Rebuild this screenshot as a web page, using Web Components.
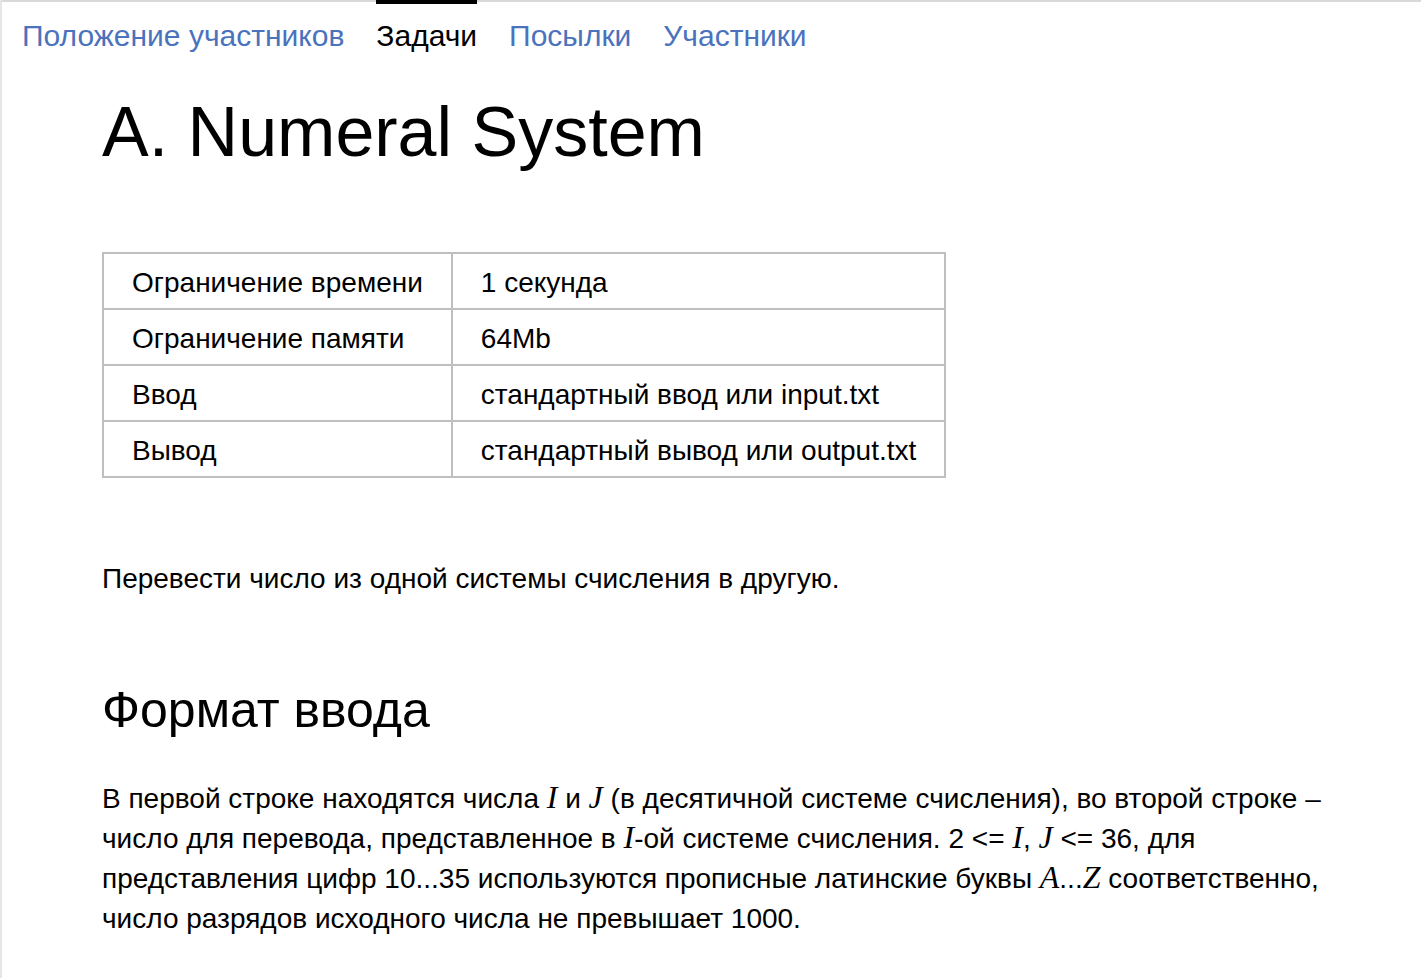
<!DOCTYPE html>
<html lang="ru">
<head>
<meta charset="utf-8">
<meta name="viewport" content="width=device-width, initial-scale=1">
<title>A. Numeral System</title>
<style>
  body { margin: 0; background: #fff; color: #000; font: 28px/40px "Liberation Sans", Arial, sans-serif; }
</style>
</head>
<body>
<contest-page>
  <contest-tabs slot="tabs">
    <contest-tab href="#standings">Положение участников</contest-tab>
    <contest-tab href="#problems" current>Задачи</contest-tab>
    <contest-tab href="#submissions">Посылки</contest-tab>
    <contest-tab href="#participants">Участники</contest-tab>
  </contest-tabs>
  <problem-statement></problem-statement>
</contest-page>

<template id="page-template">
  <style>
    :host { display: block; box-sizing: border-box; min-height: 100vh; border-left: 2px solid #e5e5e5; }
    main { display: block; padding: 33px 80px 40px 100px; }
  </style>
  <slot name="tabs"></slot>
  <main><slot></slot></main>
</template>

<template id="tabs-template">
  <style>
    :host { display: block; border-top: 2px solid #d9d9d9; }
    nav { display: flex; flex-wrap: wrap; gap: 0 32px; margin-top: -2px; padding: 0 20px; }
  </style>
  <nav><slot></slot></nav>
</template>

<template id="tab-template">
  <style>
    :host { display: block; }
    a { display: block; border-top: 4px solid transparent; padding: 12px 0 3px; font-size: 30px; line-height: 40px; color: #4a72bd; text-decoration: none; }
    a[aria-current] { border-top-color: #000; color: #000; }
  </style>
  <a><slot></slot></a>
</template>

<template id="limits-template">
  <style>
    :host { display: block; }
    table { border-collapse: collapse; }
    th, td { border: 2px solid #bfbfbf; padding: 9px 28px 5px; font-weight: 400; text-align: left; white-space: nowrap; }
  </style>
  <table>
    <tbody>
      <tr><th scope="row">Ограничение времени</th><td>1 секунда</td></tr>
      <tr><th scope="row">Ограничение памяти</th><td>64Mb</td></tr>
      <tr><th scope="row">Ввод</th><td>стандартный ввод или input.txt</td></tr>
      <tr><th scope="row">Вывод</th><td>стандартный вывод или output.txt</td></tr>
    </tbody>
  </table>
</template>

<template id="statement-template">
  <style>
    :host { display: block; }
    h1, h2 { font-weight: 400; margin: 0; }
    h1 { font-size: 70px; line-height: 80px; margin-bottom: 80px; }
    h2 { font-size: 50px; line-height: 60px; margin: 81px 0 39px; }
    p { margin: 0; }
    i { font-family: "Liberation Serif", "Times New Roman", serif; font-size: 32px; line-height: 32px; }
    problem-limits { margin-bottom: 81px; }
  </style>
  <h1>A. Numeral System</h1>
  <problem-limits></problem-limits>
  <p>Перевести число из одной системы счисления в другую.</p>
  <h2>Формат ввода</h2>
  <p>В первой строке находятся числа <i>I</i> и <i>J</i> (в десятичной системе счисления), во второй строке – число для перевода, представленное в <i>I</i>-ой системе счисления. 2 &lt;= <i>I</i>, <i>J</i> &lt;= 36, для представления цифр 10...35 используются прописные латинские буквы <i>A</i>...<i>Z</i> соответственно, число разрядов исходного числа не превышает 1000.</p>
</template>

<script>
  class TemplateElement extends HTMLElement {
    constructor() {
      super();
      const template = document.getElementById(this.constructor.template);
      this.attachShadow({ mode: 'open' }).append(template.content.cloneNode(true));
    }
  }

  class ContestPage extends TemplateElement { static template = 'page-template'; }
  class ContestTabs extends TemplateElement { static template = 'tabs-template'; }
  class ProblemLimits extends TemplateElement { static template = 'limits-template'; }
  class ProblemStatement extends TemplateElement { static template = 'statement-template'; }

  class ContestTab extends TemplateElement {
    static template = 'tab-template';
    connectedCallback() {
      const link = this.shadowRoot.querySelector('a');
      link.href = this.getAttribute('href');
      if (this.hasAttribute('current')) link.setAttribute('aria-current', 'page');
    }
  }

  customElements.define('problem-limits', ProblemLimits);
  customElements.define('problem-statement', ProblemStatement);
  customElements.define('contest-tab', ContestTab);
  customElements.define('contest-tabs', ContestTabs);
  customElements.define('contest-page', ContestPage);
</script>
</body>
</html>
